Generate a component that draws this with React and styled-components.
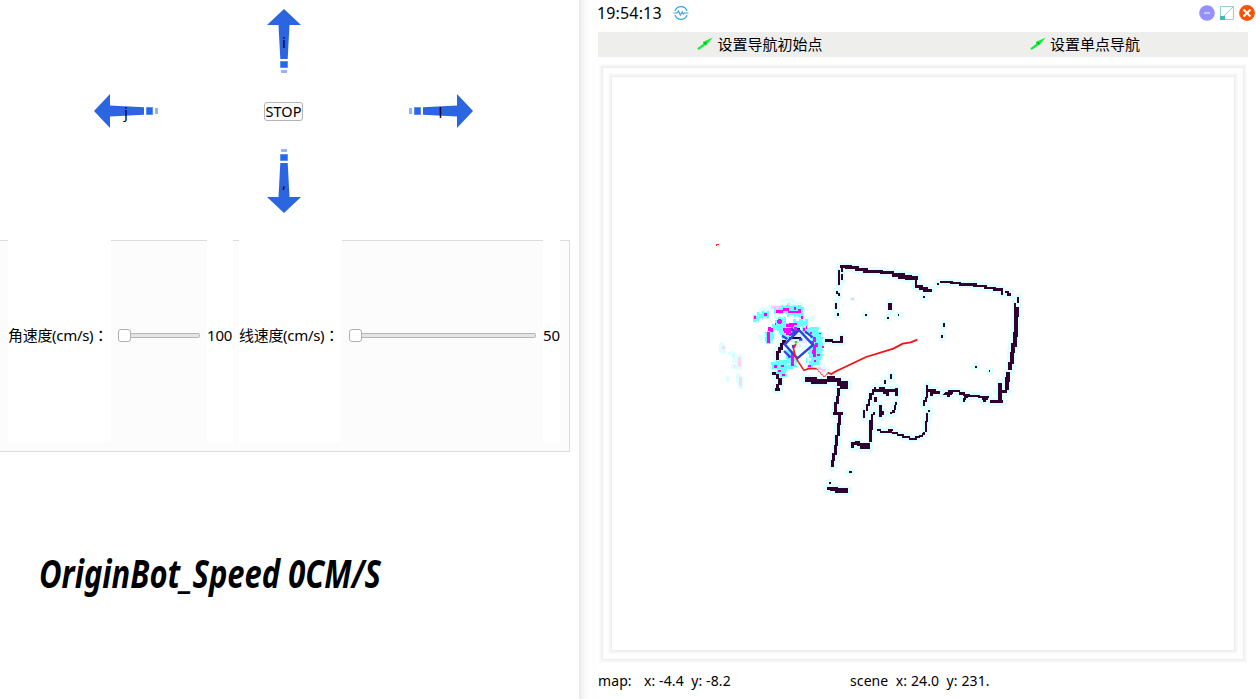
import React from 'react';
import styled, { createGlobalStyle } from 'styled-components';

const GlobalStyle = createGlobalStyle`
  * { box-sizing: border-box; }
  body {
    margin: 0;
    background: #fff;
    color: #000;
    font: 15px/20px "Noto Sans", "Noto Sans CJK SC", sans-serif;
    overflow: hidden;
  }
  button { font: inherit; color: inherit; margin: 0; padding: 0; border: 0; background: none; }
`;

const Window = styled.main`
  display: flex;
  width: 1256px;
  height: 699px;
`;

const ControlPane = styled.section`
  display: flex;
  flex-direction: column;
  width: 579px;
  flex: none;
`;

const Pad = styled.div`
  display: grid;
  grid-template-columns: 158px 157px 157px;
  grid-template-rows: repeat(3, 70px);
  place-items: center;
  padding: 6px 0 0 47px;
  height: 240px;
`;

const ArrowButton = styled.button`
  display: grid;
  place-items: center;
  grid-area: ${(p) => p.$area};
  width: ${(p) => (p.$wide ? 64 : 34)}px;
  height: ${(p) => (p.$wide ? 34 : 64)}px;
  margin-left: ${(p) => (p.$wide ? 0 : 1)}px;
  > * { grid-area: 1 / 1; }
  span { padding-top: 2px; font-size: 15px; line-height: 18px; }
`;

const StopButton = styled.button`
  grid-area: 2 / 2;
  display: flex;
  justify-content: center;
  align-items: center;
  width: 39px;
  height: 19px;
  border: 1px solid #b4b4b4;
  border-radius: 3px;
  background: #fbfbfb;
  font-size: 14.5px;
  white-space: nowrap;
`;

const SpeedPanel = styled.div`
  display: flex;
  width: 570px;
  height: 212px;
  padding: 0 9px 9px 8px;
  border: 1px solid #dcdcdc;
  border-left-width: 0;
  background: #fcfcfc;
`;

const Caption = styled.label`
  display: flex;
  align-items: center;
  flex: none;
  width: ${(p) => p.$w}px;
  margin: -12px ${(p) => p.$gap || 0}px 0 0;
  padding-bottom: 1px;
  background: #fff;
  white-space: nowrap;
  letter-spacing: ${(p) => p.$track || 0}px;
`;

const WideColon = styled.span`
  font-family: "Noto Sans CJK TC", sans-serif;
`;

const SliderBox = styled.div`
  display: flex;
  align-items: center;
  width: ${(p) => p.$w}px;
  padding: 0 7px;
  margin-top: -13px;
  flex: none;
`;

const Thumb = styled.i`
  width: 13px;
  height: 13px;
  flex: none;
  border: 1px solid #b0b0b0;
  border-radius: 3px;
  background: #fff;
`;

const Track = styled.i`
  flex: 1;
  height: 5px;
  border: 1px solid #b6b6b6;
  border-left: 0;
  border-radius: 0 2px 2px 0;
  background: #e4e4e4;
`;

const SpeedReadout = styled.h1`
  margin: 91px 0 0 39px;
  width: max-content;
  font: italic 700 40px/60px "Noto Sans", sans-serif;
  transform: scaleX(0.773);
  transform-origin: 0 50%;
`;

const MapPane = styled.section`
  display: flex;
  flex-direction: column;
  flex: 1;
  padding: 0 8px 0 19px;
  background: linear-gradient(90deg, #e9e9ed, #f6f6f8 4px, #fdfdfd 9px, #fff 20px);
`;

const TitleBar = styled.header`
  display: flex;
  align-items: center;
  height: 26px;
  margin: 0 -7px 6px 0;
  font-size: 16px;
`;

const Clock = styled.time`
  width: 76px;
  margin-left: -1px;
  letter-spacing: 0.15px;
`;

const WindowButtons = styled.div`
  display: flex;
  gap: 4px;
  margin-left: auto;
`;

const Toolbar = styled.nav`
  display: grid;
  grid-template-columns: 1fr 1fr;
  height: 25px;
  background: #eeeeec;
`;

const ToolButton = styled.button`
  display: flex;
  align-items: center;
  justify-content: center;
  gap: 4px;
  padding: 0 1px 1px 0;
`;

const softEdge = '0 0 0 1px #eeeeee, 0 0 0 2px #f3f3f3, 0 0 0 3px #f7f7f7, 0 0 0 4px #fbfbfb';

const MapFrame = styled.div`
  margin: 11px 5px 0;
  height: 591px;
  padding: 9px;
  background: #fff;
  box-shadow: ${softEdge};
`;

const MapView = styled.div`
  height: 573px;
  background: #fff;
  box-shadow: ${softEdge};
  svg { display: block; width: 100%; height: 100%; }
`;

const StatusBar = styled.footer`
  display: flex;
  padding-top: 12px;
  font-size: 14px;
  white-space: pre;
`;

const Status = styled.span`
  width: ${(p) => p.$w}px;
  letter-spacing: 0.1px;
`;

const arrows = [
  { label: 'i', area: '1 / 2', angle: 0 },
  { label: 'j', area: '2 / 1', angle: -90 },
  { label: 'l', area: '2 / 3', angle: 90 },
  { label: ',', area: '3 / 2', angle: 180 },
];

function Arrow({ label, area, angle }) {
  const wide = Math.abs(angle) === 90;
  const w = wide ? 64 : 34;
  const h = wide ? 34 : 64;
  return (
    <ArrowButton $area={area} $wide={wide}>
      <svg width={w} height={h} viewBox={`${-w / 2} ${-h / 2} ${w} ${h}`}>
        <g transform={`rotate(${angle})`}>
          <path fill="#2c65e0" d="M0-32 17-16H5.5L3.7 18h-7.4L-5.5-16H-17z" />
          <path fill="#92b2fa" d="M-4 20h8v7h-8zM-3 29h6v3h-6z" />
          <path fill="#2468f2" d="M-3.5 20.5h7v6h-7z" />
        </g>
      </svg>
      <span>{label}</span>
    </ArrowButton>
  );
}

function Slider({ width }) {
  return (
    <SliderBox $w={width}>
      <Thumb />
      <Track />
    </SliderBox>
  );
}

function NeedleIcon() {
  return (
    <svg width="16" height="14" viewBox="0 0 16 14">
      <path d="M1 12.2 8 7" stroke="#0cf034" strokeWidth="2.2" />
      <path d="M15.8.4 5.8 5 6.5 7.5 9 8.3z" fill="#0cf034" />
      <path d="M7 5.5 9.5 6 8.5 7.5z" fill="#077d20" />
    </svg>
  );
}

/* Each occupancy layer is traced on a fine grid, three units per screen pixel. */
const northWalls = [
  ['M61 51H95M76 54H118M105 60H143M130 64H190M180 68H222', 9],
  ['M216 75H255M235 80H276M255 85H293', 12],
  ['M288 80V109M284 110H310M297 116H324M309 121H335', 8],
  ['M65 47V66M58 61V106M65 72V90M52 122V132M57 130V138M49 158V178M53 190V198', 6],
  ['M351 103H358M360 97H399M390 100H423M416 104H470M463 108H500M492 114H527M520 119H550', 7],
  ['M464 101V112M547 118V134M555 127H568M562 134H572', 7],
  ['M594 140V160M586 158V194', 6],
  ['M591 170V200M588 195V260M584 245V290M579 280V310M575 305V343M571 335V360M564 365V397M560 380V421', 12],
  ['M541 400V455M533 425H560M511 455H548', 11],
  ['M322 405V440M315 430V468M324 481V509', 7],
  ['M322 425H352M330 430H340', 16],
  ['M348 427H373M370 433H396M384 424H420M416 431H436', 7],
  ['M430 435H449M433 441H443M430 447H438M428 453H434M445 438H480M474 442H506M485 448H503M490 453H498M374 430H400M380 437H390', 7],
  ['M15 272H38M35 277H68M65 259V279', 7],
  ['M210 158V181', 11],
  ['M372 220V231M367 256V263M464 350H470M506 364H511M309 142H315M134 195H140M202 204H206M233 195H238', 6],
  ['M214 371V386M193 392V403', 7],
];

const southWalls = [
  ['M136 59H172M154 65H202M201 54H224M201 61H242M230 71H264M240 80H264', 13],
  ['M237 84V108M232 108V131M227 125V162M220 162H248M240 162V196M235 188V228M231 225V258M227 254V284M222 278V304M218 300V322', 9],
  ['M200 385H234M209 389H264M225 394H264', 8],
  ['M278 263V252H291V244M285 248H297V255H331M300 264H329', 9],
  ['M332 245V180M337 210V163M343 156V165', 7],
  ['M345 80V96M339 88V105M332 99V120M327 116V137M321 132V153M313 150V173', 7],
  ['M340 91H410M368 97H382V109M410 84V109M358 85H376', 9],
  ['M347 111V125M362 135V172M370 154V164M394 157V163M401 149V159M405 136V150M409 127V134', 7],
  ['M394 42V56M374 61V73M267 336H276M209 366V372', 6],
  ['M351 209H363M359 215H397M385 210H399M396 219H414M410 226H432M427 232H450M446 236H470M466 232H480M477 227H488M486 222H494M492 215V222M498 182V217M502 158V187M508 150V157', 6],
  ['M502 76V114M498 112V127M492 120V139', 7],
  ['M503 91H528M510 98H540M509 105H518', 8],
];

const westWalls = [
  ['M252 330V346M245 340V359M238 350V370M232 362V391', 10],
  ['M222 425V434M232 432V448M240 444V466M233 462V481M226 478H240', 10],
];

const cyanCloud = [
  'M160 265H178M170 258H190M185 253H208M222 243H270M242 236H303M260 250H298M303 232V265',
  'M235 272H258M226 282H250M215 292H245M205 305V342M213 300V330M247 282V315M268 280V315M256 293H300M280 279H323M285 290V318',
  'M306 299H322M315 302H335M328 308H345M348 292V323M355 305V390M342 320V392M335 330V400M350 365V405M360 320V378',
  'M245 318H270M284 367V400M280 372V412M318 395H352M322 410H340M268 360V394',
  'M224 397V416M238 389V433M232 401H264M247 407V440M268 390V416M252 416V440',
];

const magentaCells = [
  'M227 245H249M248 239H268M265 246H298M285 230V240M298 238V250M191 254H201M163 263H169',
  'M230 274H246M239 268V281M209 291V303M214 294V307M205 306V320M206 319V340M200 334H210',
  'M257 286H283M268 282H292M250 298H278M251 306H273M262 293V315M287 292V307',
  'M317 292H322M310 299H314M333 307V313M343 320V335M337 332V348M344 346V381M339 360V373M349 338V352M360 308V313M369 348V353',
  'M278 370V408M267 374V383M221 410H231M247 404V412M250 432V439M238 420V427M345 390V396M328 406V411M356 373V379M224 282H228M303 263H308',
];

const paleCells = [
  'M66 343V366M72 352V365M90 372H102M104 380V393M120 380V414M99 409H110M83 445V449M115 437V452M122 446V470',
  'M184 240H212M209 232H249M265 218V226M283 224H303M248 213H280M328 266H337M180 322H184M354 408V425M369 405V429M364 422H380',
  'M98 376H102M70 347V356M120 380V410M102 409H106M121 441V468',
];

function Walls({ shapes, x, y }) {
  return (
    <g transform={`translate(${x} ${y}) scale(.33333)`} fill="none" shapeRendering="crispEdges">
      {shapes.map(([d, w]) => (
        <path key={`h${d}`} d={d} stroke="#e0ffff" strokeWidth={w + 15} strokeLinecap="round" strokeLinejoin="round" />
      ))}
      {shapes.map(([d, w]) => (
        <path key={d} d={d} stroke="#300030" strokeWidth={w} />
      ))}
    </g>
  );
}

function NavigationMap() {
  return (
    <svg viewBox="612 77 622 573">
      <Walls shapes={northWalls} x={820} y={250} />
      <Walls shapes={southWalls} x={760} y={360} />
      <g transform="translate(700 230) scale(.33333)" fill="none" shapeRendering="crispEdges">
        <path d={paleCells[0]} stroke="#e0ffff" strokeWidth="15" strokeLinecap="round" />
        <path d={paleCells[1]} stroke="#e0ffff" strokeWidth="15" strokeLinecap="round" />
        <path d={paleCells[2]} stroke="#fad7fa" strokeWidth="9" />
        <path d={cyanCloud.join('')} stroke="#e0ffff" strokeWidth="26" />
        <path d="M212 233H249M265 219V225M182 320H184M358 410V420M364 422H379M97 147" stroke="#ffc8ff" strokeWidth="9" />
        <path d="M451 207H464" stroke="#e0ffff" strokeWidth="14" />
        <path d="M454 207H461" stroke="#ffc8ff" strokeWidth="7" />
      </g>
      <Walls shapes={westWalls} x={700} y={230} />
      <g transform="translate(700 230) scale(.33333)" fill="none" shapeRendering="crispEdges">
        <path d={cyanCloud.join('')} stroke="#66ffff" strokeWidth="14" />
        <path d={cyanCloud.join('')} stroke="#66ffff" strokeWidth="21" strokeDasharray="7 9 12 8" />
        <path d="M300 332V360M324 377V400M262 402H271M230 389H238M276 398H285M318 404H326M330 385V392M268 259H282M222 262H231" stroke="#e0ffff" strokeWidth="8" />
        <path d={magentaCells.join('')} stroke="#ff00ff" strokeWidth="8" />
        <path d={westWalls[0][0]} stroke="#300030" strokeWidth="10" />
        <path d="M297 298 341 345 292 387 252 343Z" fill="#f0ffff" />
        <path d="M274 333H320M273 348H303M285 318H311" stroke="#e0efff" strokeWidth="14" />
        <path d="M266 325H303M291 297H300" stroke="#1b0038" strokeWidth="5" />
        <path d="M48 45H57M50 42V48" stroke="#ff3030" strokeWidth="3" />
      </g>
      <g transform="translate(700 230) scale(.33333)" fill="none">
        <path d="M297 300 339 345 292 385 254 343Z" stroke="#3044df" strokeWidth="7.5" />
        <path d="M274 293 287 314M268 316 291 304M246 317 262 327M252 363 272 382M315 304 338 322" stroke="#3044df" strokeWidth="7" />
        <path d="M297 328H307M276 349H286" stroke="#3044df" strokeWidth="8" />
        <path d="M288 341 280 354 285 376 294 394 312 421 325 416H350" stroke="#f01818" strokeWidth="4.8" strokeLinejoin="round" />
        <path d="M350 417 373 441 385 428" stroke="#f33" strokeWidth="3.5" strokeDasharray="5 2" />
        <path d="M383 428 394 432 405 425 498 381 580 356 608 341 632 337 652 329" stroke="#fa1010" strokeWidth="5.4" />
        <path d="M288 333V340" stroke="#19ec19" strokeWidth="7" />
      </g>
    </svg>
  );
}

export default function App() {
  return (
    <Window>
      <GlobalStyle />
      <ControlPane>
        <Pad>
          {arrows.map((a) => <Arrow key={a.label} {...a} />)}
          <StopButton>STOP</StopButton>
        </Pad>
        <SpeedPanel>
          <Caption $w={103} $track={-0.3}>角速度(cm/s)<WideColon lang="zh-TW">：</WideColon></Caption>
          <Slider width={96} />
          <Caption $w={26} $gap={6} $track={-0.2}>100</Caption>
          <Caption $w={103} $track={-0.3}>线速度(cm/s)<WideColon lang="zh-TW">：</WideColon></Caption>
          <Slider width={201} />
          <Caption $w={17} $track={-0.2}>50</Caption>
        </SpeedPanel>
        <SpeedReadout>OriginBot_Speed 0CM/S</SpeedReadout>
      </ControlPane>
      <MapPane>
        <TitleBar>
          <Clock>19:54:13</Clock>
          <svg width="16" height="16" viewBox="0 0 16 16" fill="none" stroke="#35a7e0" strokeWidth="1.2">
            <path d="M2 6a6.3 6.3 0 0 1 12 0M2 10a6.3 6.3 0 0 0 12 0M.5 8H4l1.4-2L7.3 10 9.2 7l1.2 2 1-1h4" />
          </svg>
          <WindowButtons>
            <svg width="16" height="16" viewBox="0 0 16 16">
              <circle cx="8" cy="8" r="7.8" fill="#9690fb" />
              <path d="M5 8h6" stroke="#d5d3ff" strokeWidth="1.5" />
            </svg>
            <svg width="16" height="16" viewBox="0 0 16 16" fill="none">
              <path d="M1.5 1.5h13v13h-13zM5 11l9.5-9.5" stroke="#92d3d1" />
              <path d="M1 11h5v4H1z" fill="#48b7b4" />
            </svg>
            <svg width="16" height="16" viewBox="0 0 16 16">
              <circle cx="8" cy="8" r="7.9" fill="#fa5305" />
              <path d="m4.5 4.5 7 7m0-7-7 7" stroke="#fff" strokeWidth="2" />
            </svg>
          </WindowButtons>
        </TitleBar>
        <Toolbar>
          <ToolButton><NeedleIcon />设置导航初始点</ToolButton>
          <ToolButton><NeedleIcon />设置单点导航</ToolButton>
        </Toolbar>
        <MapFrame>
          <MapView><NavigationMap /></MapView>
        </MapFrame>
        <StatusBar>
          <Status $w={46}>map:</Status>
          <Status $w={206}>x: -4.4  y: -8.2</Status>
          <Status>scene  x: 24.0  y: 231.</Status>
        </StatusBar>
      </MapPane>
    </Window>
  );
}
